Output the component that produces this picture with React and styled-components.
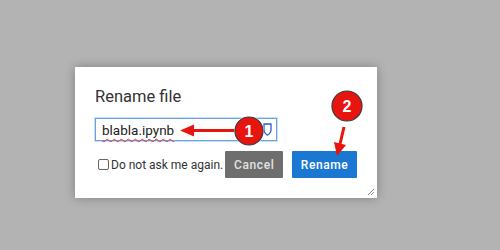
import React from "react";
import styled, { createGlobalStyle } from "styled-components";

const Global = createGlobalStyle`
  html, body { margin: 0; padding: 0; }
  body {
    background: #b3b3b3;
    font-family: Roboto, "Noto Sans", sans-serif;
    width: 500px;
    height: 250px;
    overflow: hidden;
  }
`;

const Page = styled.div`
  position: relative;
  width: 500px;
  height: 250px;
  padding: 67px 0 0 75px;
  box-sizing: border-box;
`;

const Dialog = styled.div`
  position: relative;
  width: 302px;
  height: 131px;
  box-sizing: border-box;
  background: #fff;
  box-shadow: 0 0 10px rgba(0, 0, 0, 0.28);
  padding: 19px 20px 0 20px;
  display: flex;
  flex-direction: column;
`;

const Title = styled.div`
  font-size: 16.5px;
  line-height: 22px;
  color: #333;
  height: 22px;
`;

const InputBox = styled.div`
  margin-top: 10px;
  width: 182px;
  height: 23px;
  box-sizing: border-box;
  border: 1px solid #66a3e0;
  box-shadow: 0 0 0 1px rgba(102, 163, 224, 0.35);
  display: flex;
  align-items: center;
  padding: 0 4px 0 6px;
  justify-content: space-between;
`;

const InputText = styled.span`
  font-size: 13.5px;
  line-height: 20px;
  color: #222;
  text-decoration: underline wavy #e33;
  text-decoration-thickness: 1px;
  text-underline-offset: 3px;
`;

const Row = styled.div`
  margin-top: 10px;
  display: flex;
  align-items: center;
  height: 27px;
`;

const Check = styled.label`
  display: flex;
  align-items: center;
  font-size: 12px;
  color: #333;
  margin-left: 3px;
  gap: 2px;
  white-space: nowrap;
`;

const Box = styled.span`
  width: 9px;
  height: 9px;
  border: 1px solid #666;
  border-radius: 2px;
  background: #fff;
`;

const Button = styled.div`
  height: 27px;
  box-sizing: border-box;
  display: flex;
  align-items: center;
  justify-content: center;
  font-size: 12px;
  font-weight: 500;
  letter-spacing: 0.6px;
  border-radius: 1px;
  background: ${(p) => (p.$primary ? "#1b78d2" : "#6e6e6e")};
  color: ${(p) => (p.$primary ? "#fff" : "#e2e2e2")};
  width: ${(p) => p.$w}px;
  margin-left: ${(p) => p.$ml}px;
`;

const Grip = styled.svg`
  position: absolute;
  right: 2px;
  bottom: 2px;
`;

const Overlay = styled.svg`
  position: absolute;
  left: 0;
  top: 0;
  pointer-events: none;
`;

const Marker = ({ cx, cy, r, n }) => (
  <g>
    <circle cx={cx} cy={cy} r={r + 1} fill="#fff" opacity="0.8" />
    <circle cx={cx} cy={cy} r={r} fill="#e8140f" stroke="#3a3a3a" strokeWidth="1.2" />
    <text
      x={cx}
      y={cy + 5.5}
      textAnchor="middle"
      fontFamily="'Liberation Sans', Arial, sans-serif"
      fontWeight="700"
      fontSize="16"
      fill="#fff"
    >
      {n}
    </text>
  </g>
);

export default function App() {
  return (
    <>
      <Global />
      <Page>
        <Dialog>
          <Title>Rename file</Title>
          <InputBox>
            <InputText>blabla.ipynb</InputText>
            <svg width="9" height="13" viewBox="0 0 9 13">
              <path d="M1 1 H8 V7 C8 10 5 12 4.5 12 C4 12 1 10 1 7 Z" fill="none" stroke="#2a5bd7" strokeWidth="1.3" />
            </svg>
          </InputBox>
          <Row>
            <Check>
              <Box />
              Do not ask me again.
            </Check>
            <Button $w={58} $ml={2}>Cancel</Button>
            <Button $primary $w={65} $ml={9}>Rename</Button>
          </Row>
          <Grip width="8" height="8" viewBox="0 0 8 8">
            <path d="M7 1 L1 7 M7 4 L4 7" stroke="#888" strokeWidth="1" />
          </Grip>
        </Dialog>
        <Overlay width="500" height="250" viewBox="0 0 500 250">
          <line x1="236" y1="130.5" x2="190" y2="130.5" stroke="#e8140f" strokeWidth="3" />
          <polygon points="180,130.5 194,124.5 194,136.5" fill="#e8140f" />
          <Marker cx={249} cy={131} r={14} n="1" />
          <line x1="344" y1="127" x2="340" y2="144" stroke="#e8140f" strokeWidth="3" />
          <polygon points="337,156 334,142 346,145" fill="#e8140f" />
          <Marker cx={347} cy={106} r={15} n="2" />
        </Overlay>
      </Page>
    </>
  );
}
